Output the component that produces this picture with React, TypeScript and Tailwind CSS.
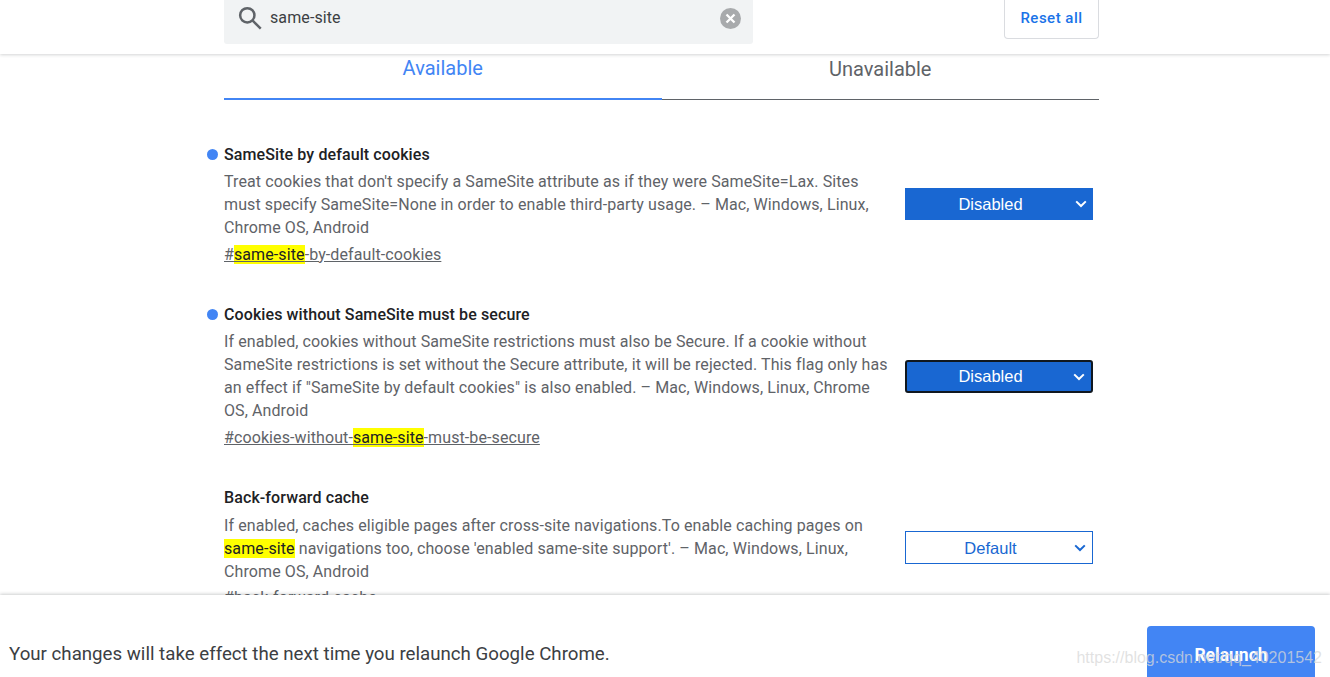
import { Fragment, type ReactNode } from 'react';

type Flag = {
  title: string;
  modified: boolean;
  lines: ReactNode[];
  link: ReactNode;
  value: string;
  focused?: boolean;
  nudge: string;
};

const Hit = ({ children }: { children: ReactNode }) => <span className="bg-[#ffff00] text-[#202124]">{children}</span>;

const flags: Flag[] = [
  {
    title: 'SameSite by default cookies',
    modified: true,
    lines: [
      "Treat cookies that don't specify a SameSite attribute as if they were SameSite=Lax. Sites",
      'must specify SameSite=None in order to enable third-party usage. – Mac, Windows, Linux,',
      'Chrome OS, Android',
    ],
    link: (
      <>
        #<Hit>same-site</Hit>-by-default-cookies
      </>
    ),
    value: 'Disabled',
    nudge: 'mt-0',
  },
  {
    title: 'Cookies without SameSite must be secure',
    modified: true,
    lines: [
      'If enabled, cookies without SameSite restrictions must also be Secure. If a cookie without',
      'SameSite restrictions is set without the Secure attribute, it will be rejected. This flag only has',
      'an effect if "SameSite by default cookies" is also enabled. – Mac, Windows, Linux, Chrome',
      'OS, Android',
    ],
    link: (
      <>
        #cookies-without-<Hit>same-site</Hit>-must-be-secure
      </>
    ),
    value: 'Disabled',
    focused: true,
    nudge: 'mt-[1px]',
  },
  {
    title: 'Back-forward cache',
    modified: false,
    lines: [
      'If enabled, caches eligible pages after cross-site navigations.To enable caching pages on',
      <>
        <Hit>same-site</Hit> navigations too, choose 'enabled same-site support'. – Mac, Windows, Linux,
      </>,
      'Chrome OS, Android',
    ],
    link: <>#back-forward-cache</>,
    value: 'Default',
    nudge: 'mt-0',
  },
];

function Chevron({ className }: { className: string }) {
  return (
    <svg viewBox="0 0 12 8" className={`h-2 w-3 ${className}`} fill="none" stroke="currentColor" strokeWidth="2">
      <path d="M1.2 1.4 6 6l4.8-4.6" />
    </svg>
  );
}

function FlagSelect({ value, focused }: { value: string; focused?: boolean }) {
  const isDefault = value === 'Default';
  let tone = 'bg-[#1967d2] text-white';
  if (isDefault) tone = 'border border-[#1967d2] bg-white text-[#1967d2]';
  if (focused) tone = 'rounded-[3px] border-2 border-[#101820] bg-[#1967d2] text-white';
  return (
    <div className={`relative flex w-[188px] items-center justify-center font-['Liberation_Sans',sans-serif] text-[16.5px] ${isDefault || focused ? 'h-[33px]' : 'h-[32px]'} ${tone}`}>
      <span className={`pr-[17px] ${isDefault ? 'pt-[2px]' : ''}`}>{value}</span>
      <Chevron className={`absolute top-1/2 right-[6px] -translate-y-1/2 ${isDefault ? 'text-[#1967d2]' : 'text-white'}`} />
    </div>
  );
}

function FlagRow({ flag }: { flag: Flag }) {
  return (
    <div className="relative flex w-[875px] items-center justify-between">
      {flag.modified && <span className="absolute top-[6px] -left-[17px] h-[11px] w-[11px] rounded-full bg-[#4285f4]" />}
      <div className="w-[670px]">
        <h2 className="text-[16px] leading-[23px] font-medium tracking-[0.1px] text-[#202124]">{flag.title}</h2>
        <p className="mt-[4.3px] text-[16px] leading-[23px] tracking-[0.1px] whitespace-nowrap text-[#5f6368]">
          {flag.lines.map((line, i) => (
            <Fragment key={i}>
              {line}
              <br />
            </Fragment>
          ))}
        </p>
        <div className="mt-[3.4px] text-[16px] leading-[23px] tracking-[0.1px] whitespace-nowrap text-[#5f6368] underline">{flag.link}</div>
      </div>
      <div className={`mr-[6px] ${flag.nudge}`}>
        <FlagSelect value={flag.value} focused={flag.focused} />
      </div>
    </div>
  );
}

export default function App() {
  return (
    <div className="relative flex h-[677px] w-[1330px] flex-col overflow-hidden bg-white font-['Roboto',sans-serif]">
      <header className="relative z-10 h-[54px] shrink-0 bg-white pl-[224px] shadow-[0_1px_3px_rgba(60,64,67,0.22)]">
        <div className="flex w-[875px] items-start justify-between">
          <div className="flex h-[44px] w-[529px] items-center rounded-b-[3px] bg-[#f1f3f4] pr-[12px] pl-[13px]">
            <svg viewBox="0 0 24 24" className="mb-[9px] h-[26px] w-[26px] text-[#5f6368]" fill="none" stroke="currentColor" strokeWidth="2.3">
              <circle cx="9.5" cy="9.5" r="6.6" />
              <path d="m14.5 14.5 7.4 7.4" />
            </svg>
            <span className="mb-[9px] ml-[7px] flex-1 text-[16px] tracking-[0.1px] text-[#3c4043]">same-site</span>
            <svg viewBox="0 0 20 20" className="mb-[8px] h-[21px] w-[21px]">
              <circle cx="10" cy="10" r="10" fill="#a8aaac" />
              <path d="m6.2 6.2 7.6 7.6m0-7.6-7.6 7.6" stroke="#fff" strokeWidth="2.2" />
            </svg>
          </div>
          <button className="flex h-[39px] w-[95px] items-center justify-center rounded-b-[4px] border border-t-0 border-[#dadce0] bg-white pb-[2px] text-[15px] font-medium tracking-[0.5px] text-[#1a73e8]">
            Reset all
          </button>
        </div>
      </header>

      <main className="min-h-0 flex-1 overflow-hidden pl-[224px]">
        <div className="flex w-[875px]">
          <div className="h-[46px] w-1/2 border-b-2 border-[#4285f4] pt-[2px] text-center text-[20px] leading-[24px] text-[#4285f4]">Available</div>
          <div className="mt-[1px] h-[45px] w-1/2 border-b border-[#5f6368] pt-[2px] text-center text-[20px] leading-[24px] text-[#5f6368]">Unavailable</div>
        </div>
        <div className="mt-[43px] flex flex-col gap-[37.5px]">
          {flags.map(flag => (
            <FlagRow key={flag.title} flag={flag} />
          ))}
        </div>
      </main>

      <footer className="z-10 flex h-[82px] shrink-0 items-end justify-between bg-white pr-[15px] pl-[9px] shadow-[0_-1px_3px_rgba(60,64,67,0.25)]">
        <p className="mb-[11px] text-[18.7px] leading-[24px] text-[#3c4043]">Your changes will take effect the next time you relaunch Google Chrome.</p>
        <button className="h-[51px] w-[168px] rounded-t-[4px] bg-[#4285f4] pt-[7px] text-[17.5px] font-bold text-white">Relaunch</button>
      </footer>

      <span className="absolute right-[8px] bottom-[9px] z-20 font-['Liberation_Sans',sans-serif] text-[16px] leading-[20px] text-[#d8d8d8]/75">
        https://blog.csdn.net/qq_40201542
      </span>
    </div>
  );
}
